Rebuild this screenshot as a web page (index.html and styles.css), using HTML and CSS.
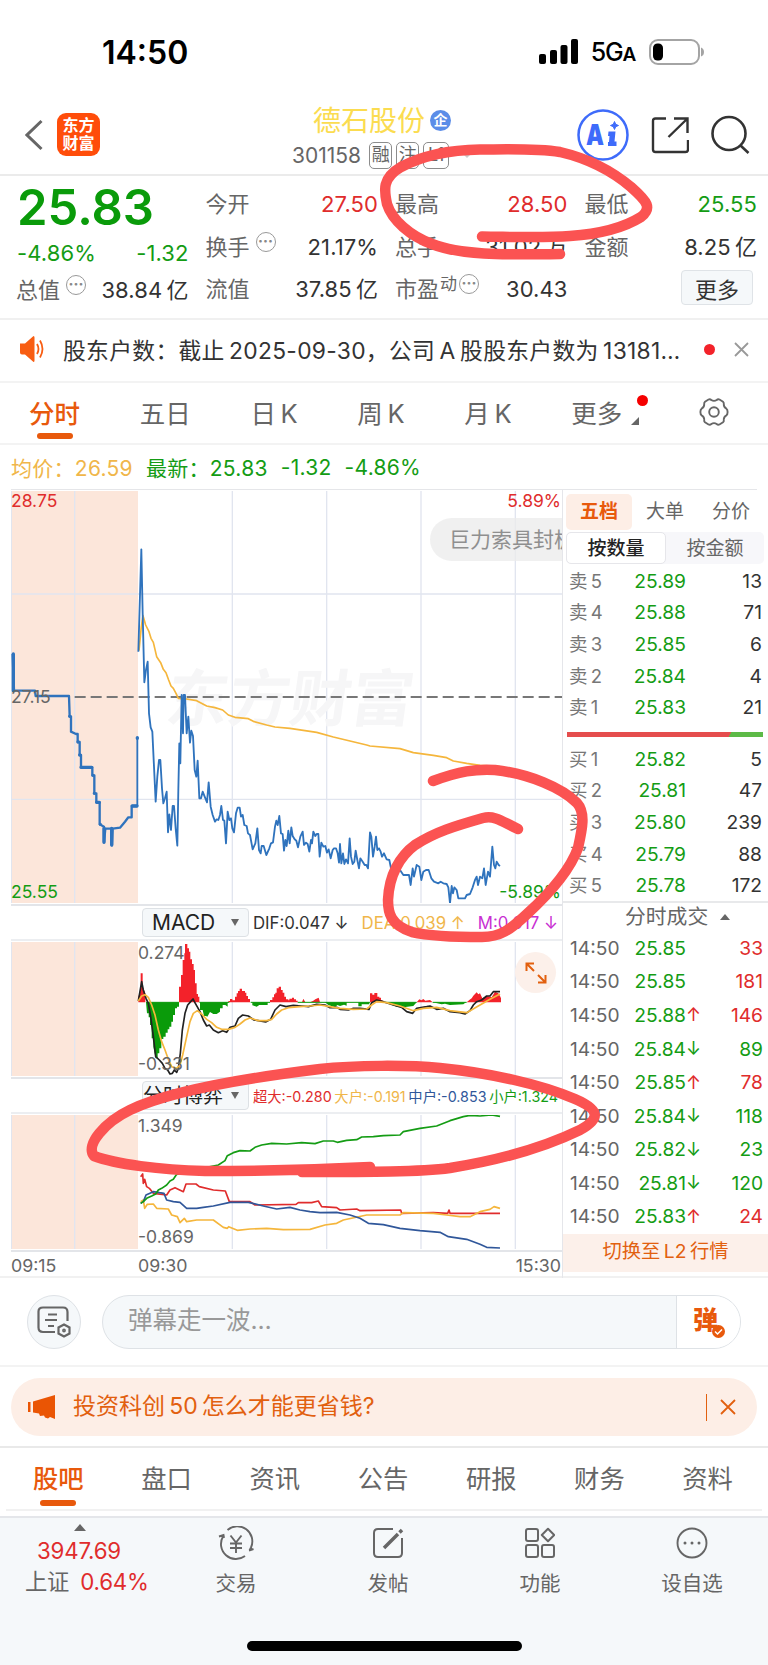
FILE: index.html
```html
<!DOCTYPE html>
<html lang="zh-CN">
<head>
    <meta charset="UTF-8">
    <title>德石股份 301158</title>
    <link rel="stylesheet" href="styles.css">
</head>
<body>

<div class="phone">
    <div class="status">
        <span class="clock">14:50</span>
        <div class="status-right">
            <svg width="40" height="26" viewBox="0 0 40 26">
                <rect x="0" y="15" width="7" height="10" rx="2"/>
                <rect x="11" y="11" width="7" height="14" rx="2"/>
                <rect x="21.500" y="6" width="7" height="19" rx="2"/>
                <rect x="32" y="0" width="7" height="25" rx="2"/>
            </svg>
            <span class="net">5G<small>A</small></span>
            <svg width="56" height="26" viewBox="0 0 56 26">
                <rect x="1" y="1" width="49" height="24" rx="8" fill="none" stroke="#a4a4a4" stroke-width="2"/>
                <rect x="4" y="4.500" width="10" height="17" rx="4.500"/>
                <path d="M52 8.500q3 1 3 4.500t-3 4.500z" fill="#a4a4a4"/>
            </svg>
        </div>
    </div>

    <header class="header">
        <div class="header-side">
            <svg class="back" width="20" height="32" viewBox="0 0 20 32" fill="none" stroke="#666" stroke-width="3"><path d="M16.500 2 2 16l14.500 14"/></svg>
            <div class="logo">东方<br>财富</div>
        </div>
        <div class="stock">
            <div class="stock-name">德石股份<span class="badge">企</span></div>
            <div class="stock-code">301158 <i>融</i><i>注</i><i>L1</i><b class="caret"></b></div>
        </div>
        <div class="header-side tools">
            <svg width="52" height="52" viewBox="0 0 52 52">
                <circle cx="26" cy="26" r="24.500" fill="none" stroke="#3e6bfa" stroke-width="2.500"/>
                <text class="ai" x="9" y="36" textLength="18" lengthAdjust="spacingAndGlyphs">A</text>
                <path d="M31.500 22.500h7l-1 10h2v4.500h-8.500v-4h1l.5-6h-1.500z" fill="#3e6bfa"/>
                <path d="M37.500 12.500l1.200 2.800 2.800 1.200-2.800 1.200-1.200 2.800-1.200-2.800-2.800-1.200 2.800-1.200z" fill="#3e6bfa" stroke="#3e6bfa"/>
            </svg>
            <svg width="38" height="38" viewBox="0 0 38 38" fill="none" stroke="#333" stroke-width="2.400">
                <path d="M15 2.500H4.500Q2 2.500 2 5V33.500q0 2.500 2.500 2.500h30q2.500 0 2.500-2.500V24M23 2.500h13.500V17M36.500 2.500 17.500 21"/>
            </svg>
            <svg width="40" height="40" viewBox="0 0 40 40" fill="none" stroke="#333" stroke-width="2.600">
                <circle cx="18" cy="18.500" r="16.500"/><path d="M29 30l8.500 8"/>
            </svg>
        </div>
    </header>

    <section class="quote">
        <div class="quote-col first">
            <strong>25.83</strong>
            <div class="green"><span>-4.86%</span><span>-1.32</span></div>
            <div><label>总值<sup class="dots">···</sup></label><span>38.84&#8201;亿</span></div>
        </div>
        <div class="quote-col">
            <div><label>今开</label><span class="red">27.50</span></div>
            <div><label>换手<sup class="dots">···</sup></label><span>21.17%</span></div>
            <div><label>流值</label><span>37.85&#8201;亿</span></div>
        </div>
        <div class="quote-col">
            <div><label>最高</label><span class="red">28.50</span></div>
            <div><label>总手</label><span>31.02&#8201;万</span></div>
            <div><label>市盈<sup class="dong">动</sup><sup class="dots">···</sup></label><span>30.43</span></div>
        </div>
        <div class="quote-col">
            <div><label>最低</label><span class="green">25.55</span></div>
            <div><label>金额</label><span>8.25&#8201;亿</span></div>
            <div><label></label><button class="more">更多</button></div>
        </div>
    </section>

    <section class="notice">
        <svg width="24" height="26" viewBox="0 0 24 26">
            <path d="M0 7.500h5L13.500 0q1 0 1 1.500v23q0 1.500-1 1.500L5 18.500H2q-2 0-2-2z" fill="#f85d12"/>
            <path d="M17 8q3 5 0 10M20 4.500q5 8.500 0 17" fill="none" stroke="#f85d12" stroke-width="1.800"/>
        </svg>
        <p>股东户数：截止&#8201;2025-09-30，公司&#8201;A&#8201;股股东户数为&#8201;13181…</p>
        <b class="dot"></b>
        <svg width="15" height="15" viewBox="0 0 15 15" stroke="#999" stroke-width="1.800"><path d="M1 1l13 13M14 1 1 14"/></svg>
    </section>

    <nav class="periods">
        <a class="on">分时</a>
        <a>五日</a>
        <a>日&#8201;K</a>
        <a>周&#8201;K</a>
        <a>月&#8201;K</a>
        <a class="with-dot">更多<svg width="8" height="8"><path d="M8 0v8H0z" fill="#666"/></svg></a>
        <svg class="gear" width="30" height="30" viewBox="0 0 30 30" fill="none" stroke="#666" stroke-width="1.900">
            <path d="M9.500 2.500q1.500-.8 2.800.5 2.700 1.800 5.400 0 1.300-1.300 2.800-.5l3.500 2.200q1 .8.800 2.400-.2 3.200 2.600 4.600 1.200.8 1.200 3.300t-1.200 3.300q-2.800 1.400-2.600 4.600.2 1.600-.8 2.400l-3.500 2.200q-1.500.8-2.800-.5-2.700-1.800-5.400 0-1.300 1.300-2.800.5L6 25.300q-1-.8-.8-2.400.2-3.200-2.600-4.600-1.200-.8-1.200-3.300t1.200-3.300Q5.400 10.300 5.200 7.100 5 5.500 6 4.700z"/>
            <circle cx="15" cy="15" r="4.800"/>
        </svg>
    </nav>

    <div class="legend">
        <span class="gold">均价：26.59</span><span>最新：25.83</span><span>-1.32</span><span>-4.86%</span>
    </div>

    <main class="trade">
        <div class="charts">
            <!-- intraday price -->
            <div class="chart">
                <svg class="plot" viewBox="33 33 1653 1236" preserveAspectRatio="none">
                    <rect x="33" y="33" width="381" height="1236" fill="#fce6da"/>
                    <path class="grid" d="M34 33v1236M224 33v1236M697 33v1236M980 33v1236M1263 33v1236M1546 33v1236M33 342h1653M33 958h1653"/>
                    <text class="watermark" transform="translate(492 722) skewX(-8)">东方财富</text>
                    <path d="M224 651h1462" stroke="#777" stroke-width="6" stroke-dasharray="33 15"/>
                    <polyline class="avg" points="417,512 424,440 429,407 437,435 447,455 453,475 460,487 470,530 482,548 490,568 498,578 506,600 513,618 520,625 528,640 535,655 560,657 590,662 620,678 645,683 668,690 685,705 705,712 745,716 760,724 800,735 825,741 870,745 950,757 1000,771 1050,783 1100,795 1110,798 1200,806 1240,818 1300,826 1340,833 1360,843 1400,850 1440,856 1500,860"/>
                    <polyline class="pre" points="38,522 42,632 105,632 107,648 207,648 209,709 213,709 213,755 228,762 233,762 233,786 239,786 239,825 243,825 243,862 277,862 277,886 283,886 283,940 289,940 289,967 299,967 299,1033 312,1040 312,1087 316,1046 334,1046 336,1096 338,1046 360,1043 375,1025 385,1012 395,1012 395,978 412,978"/>
                    <path class="pre-dot" d="M40 522v110M312 1045v42M335 1045v50M209 709v0M234 786v0M239 825v0M243 862h32M279 886v0M283 940v0M290 967h8M301 1033v0M397 978h14M412 773v2"/>
                    <path class="price" d="M412 978V773"/>
                    <polyline class="price" points="415,515 424,208 428,400 433,607 438,570 443,545 447,700 452,742 457,755 462,860 467,965 472,890 477,840 481,840 486,925 490,970 495,955 500,935 504,1057 508,1003 513,1050 518,978 522,978 527,1045 532,1097 535,930 538,790 541,850 545,645 549,760 551,645 555,645 560,760 565,710 570,788 574,752 579,768 584,870 589,890 593,842 598,955 603,955 608,935 614,950 621,967 626,907 632,980 638,1005 645,1025 650,1018 655,1020 660,1005 664,978 669,1020 673,1022 678,1090 683,995 688,1020 693,1015 697,1045 702,1057 708,1000 713,983 719,983 723,1010 728,1005 733,1035 740,1038 744,1060 750,1065 758,1108 766,1090 772,1045 777,1110 782,1120 785,1098 791,1098 799,1125 808,1105 813,1090 819,1087 825,1040 829,1022 833,1035 838,1008 843,1060 848,1062 852,1112 856,1080 860,1098 865,1052 869,1090 874,1042 878,1068 884,1078 889,1082 894,1102 901,1070 908,1055 912,1095 918,1088 923,1092 928,1115 933,1080 936,1090 940,1055 946,1068 950,1062 955,1062 959,1130 964,1088 970,1100 976,1098 981,1118 986,1108 992,1135 998,1110 1002,1105 1008,1105 1013,1120 1017,1148 1020,1092 1024,1150 1029,1120 1033,1152 1038,1138 1044,1150 1049,1075 1053,1130 1058,1152 1063,1145 1067,1112 1072,1140 1077,1165 1081,1135 1088,1145 1094,1155 1099,1155 1104,1165 1110,1057 1114,1070 1119,1130 1124,1100 1128,1070 1132,1110 1137,1105 1142,1115 1146,1130 1152,1120 1160,1138 1168,1140 1173,1165 1180,1170 1190,1175 1200,1170 1210,1185 1227,1185 1232,1215 1238,1165 1242,1190 1250,1155 1258,1160 1264,1200 1270,1175 1278,1170 1286,1170 1294,1195 1302,1205 1315,1210 1322,1205 1330,1210 1340,1212 1345,1222 1350,1270 1355,1218 1359,1240 1363,1222 1370,1230 1375,1255 1395,1255 1400,1245 1410,1242 1418,1222 1425,1200 1430,1190 1434,1215 1440,1190 1447,1195 1452,1165 1457,1215 1464,1175 1470,1190 1477,1100 1482,1155 1486,1165 1490,1145 1496,1155 1500,1158"/>
                </svg>
                <span class="tag tl red">28.75</span>
                <span class="tag ml">27.15</span>
                <span class="tag bl green">25.55</span>
                <span class="tag tr red">5.89%</span>
                <span class="tag br green">-5.89%</span>
                <div class="bullet">巨力索具封板</div>
            </div>

            <div class="indicator">
                <div class="select">MACD<i></i></div>
                <p class="macd-values"><span>DIF:0.047 ↓</span><span class="gold">DEA:0.039 ↑</span><span class="purple">M:0.017 ↓</span></p>
            </div>
            <div class="chart small">
                <svg class="plot" viewBox="33 156 1653 402" preserveAspectRatio="none">
                    <rect x="33" y="156" width="381" height="402" fill="#fce6da"/>
                    <path class="grid" d="M34 156v402M224 156v402M697 156v402M980 156v402M1263 156v402M1546 156v402"/>
                    <path fill="#f3222a" d="M415 337V320L422 300V250H428V290L436 310V337ZM537 337V290H543V255H548V210H553V190H555V162H562V175H567V185H571V208H576V222H581V240H585V280H590V312H594V320H598V337ZM685 337V333H690V327H697V331H705V320H710V310H714V303H719V296H726V303H735V308H739V318H744V327H750V337ZM810 337V330H817V322H822V313H826V308H830V295H836V290H843V300H848V308H853V320H858V328H865V331H868V326H876V323H882V328H888V332H893V337ZM906 337 910 326 916 337ZM930 337 940 332 946 328 956 323 960 337ZM1110 337V310H1117V314H1123V309H1132V320H1138V323H1143V330H1147V337ZM1250 337 1258 328 1264 331 1270 327 1276 332 1290 330 1298 337ZM1400 337 1408 330 1415 325 1420 317 1430 307 1435 313 1440 310 1447 325 1460 318 1475 322 1485 305 1495 310 1500 318 1503 325V337Z"/>
                    <path fill="#0a9b0a" d="M438 337 441 370H446V382H450V405H455V445H460V470L467 505H473V490H478V475H484V447H490V440H497V428H503V418H508V410H514V395H519V375H525V355H531V350H537V337ZM600 337V360H608L612 378H618L622 380 630 366 640 372 650 372 660 365V355H668V345H676L683 350V337ZM757 337V346L770 350 778 345H803V337ZM975 337 985 345 1005 352 1012 345 1020 348 1032 344 1040 347V337ZM1075 337V349H1085V343H1108V337ZM1155 337 1170 343 1190 350 1210 352 1240 348 1250 337ZM1298 337 1325 343 1335 341 1350 345 1390 343 1398 337Z"/>
                    <path d="M438 337h99M598 337h90M752 337h58M893 337h217M1146 337h104M1298 337h102" stroke="#0a9b0a" stroke-width="3"/>
                    <polyline class="line" stroke="#222" points="415,333 425,275 430,300 438,325 445,340 452,380 460,440 467,500 478,510 487,520 495,535 503,540 510,552 517,550 523,540 530,547 535,535 541,490 547,420 555,370 563,345 572,335 579,327 586,340 600,365 610,390 620,408 628,405 640,420 655,428 668,422 680,427 690,412 705,408 715,385 728,375 745,378 762,390 775,392 797,396 812,388 825,360 840,345 858,350 880,346 905,348 925,350 950,343 975,345 990,353 1010,352 1020,358 1045,360 1060,355 1080,355 1107,358 1115,338 1130,330 1150,335 1180,345 1205,352 1220,365 1238,370 1250,355 1280,350 1290,348 1310,358 1330,355 1350,365 1380,368 1395,372 1410,362 1420,345 1430,335 1445,330 1460,318 1470,318 1480,305 1500,305"/>
                    <polyline class="line" stroke="#f5b63c" points="415,333 425,318 435,314 445,322 455,345 465,375 475,420 485,455 495,480 505,508 515,530 530,535 540,525 548,495 560,440 570,395 580,370 592,362 605,372 620,388 635,398 650,412 665,418 685,418 705,412 720,402 735,390 750,384 775,392 800,392 815,388 830,372 845,360 865,353 900,350 930,348 960,345 990,350 1020,355 1060,358 1100,357 1115,345 1130,335 1160,338 1200,348 1240,362 1270,355 1310,352 1350,362 1400,368 1440,345 1470,328 1500,312"/>
                </svg>
                <span class="tag tm">0.274</span>
                <span class="tag bm">-0.331</span>
                <div class="expand">
                    <svg width="22" height="22" viewBox="0 0 22 22" fill="none" stroke="#e2600f" stroke-width="2"><path d="M1.500 9V1.500H9M1.500 1.500 9 9M20.500 13v7.500H13M20.500 20.500 13 13"/></svg>
                </div>
            </div>

            <div class="indicator">
                <div class="select game">分时博弈<i></i></div>
                <p class="game-values"><span class="red">超大:-0.280</span><span class="gold">大户:-0.191</span><span class="blue">中户:-0.853</span><span class="green">小户:1.324</span></p>
            </div>
            <div class="chart small">
                <svg class="plot" viewBox="33 675 1653 402" preserveAspectRatio="none">
                    <rect x="33" y="675" width="381" height="402" fill="#fce6da"/>
                    <path class="grid" d="M34 675v402M224 675v402M697 675v402M980 675v402M1263 675v402M1546 675v402"/>
                    <polyline class="line" stroke="#e02c2c" points="422,860 428,852 430,880 434,868 440,890 448,895 460,910 500,915 510,900 525,893 550,905 558,882 588,882 598,890 640,900 676,903 688,935 750,935 765,945 888,943 895,938 935,938 955,933 965,950 1010,953 1020,960 1070,957 1080,962 1202,960 1205,970 1300,968 1343,970 1347,960 1350,970 1500,970"/>
                    <polyline class="line" stroke="#f5b63c" points="422,935 430,930 434,955 442,943 460,942 470,955 505,957 515,975 532,980 540,998 553,985 560,995 590,990 640,990 670,1012 682,1015 686,1010 712,1021 750,1017 800,1015 850,1019 930,1018 975,1005 1010,1000 1030,990 1100,975 1200,975 1210,968 1300,970 1340,975 1380,980 1410,980 1440,965 1470,958 1482,950 1500,955"/>
                    <polyline class="line" stroke="#30579a" points="422,940 430,935 438,915 460,905 478,908 492,910 500,930 520,935 540,937 560,955 590,955 610,952 640,948 690,937 745,937 790,948 830,957 870,952 900,960 930,965 960,968 1010,967 1050,975 1080,985 1105,1000 1150,1004 1200,1015 1260,1022 1320,1027 1345,1040 1400,1048 1440,1063 1460,1072 1500,1074"/>
                    <polyline class="line" stroke="#149c14" points="422,940 430,935 440,925 455,918 467,912 475,900 485,895 500,885 510,873 520,868 530,853 590,838 655,825 675,812 682,797 700,788 720,782 750,783 765,772 785,765 815,760 860,762 905,758 945,761 970,753 1000,753 1012,757 1040,751 1070,749 1085,741 1120,740 1150,737 1200,735 1210,725 1260,715 1310,708 1350,692 1390,680 1410,676 1440,678 1475,675 1500,679"/>
                </svg>
                <span class="tag tm">1.349</span>
                <span class="tag bm">-0.869</span>
            </div>
            <div class="times"><span>09:15</span><span>09:30</span><span>15:30</span></div>
        </div>

        <aside class="book">
            <div class="book-tabs"><a class="on">五档</a><a>大单</a><a>分价</a></div>
            <div class="switch"><a class="on">按数量</a><a>按金额</a></div>
            <div class="levels">
                <div><label>卖&#8201;5</label><span>25.89</span><b>13</b></div>
                <div><label>卖&#8201;4</label><span>25.88</span><b>71</b></div>
                <div><label>卖&#8201;3</label><span>25.85</span><b>6</b></div>
                <div><label>卖&#8201;2</label><span>25.84</span><b>4</b></div>
                <div><label>卖&#8201;1</label><span>25.83</span><b>21</b></div>
            </div>
            <div class="ratio"></div>
            <div class="levels">
                <div><label>买&#8201;1</label><span>25.82</span><b>5</b></div>
                <div><label>买&#8201;2</label><span>25.81</span><b>47</b></div>
                <div><label>买&#8201;3</label><span>25.80</span><b>239</b></div>
                <div><label>买&#8201;4</label><span>25.79</span><b>88</b></div>
                <div><label>买&#8201;5</label><span>25.78</span><b>172</b></div>
            </div>
            <div class="ticks-title">分时成交<svg width="10" height="6"><path d="M5 0l5 6H0z" fill="#666"/></svg></div>
            <div class="ticks">
                <div><label>14:50</label><span>25.85</span><i></i><b class="red">33</b></div>
                <div><label>14:50</label><span>25.85</span><i></i><b class="red">181</b></div>
                <div><label>14:50</label><span>25.88</span><i class="red">↑</i><b class="red">146</b></div>
                <div><label>14:50</label><span>25.84</span><i>↓</i><b>89</b></div>
                <div><label>14:50</label><span>25.85</span><i class="red">↑</i><b class="red">78</b></div>
                <div><label>14:50</label><span>25.84</span><i>↓</i><b>118</b></div>
                <div><label>14:50</label><span>25.82</span><i>↓</i><b>23</b></div>
                <div><label>14:50</label><span>25.81</span><i>↓</i><b>120</b></div>
                <div><label>14:50</label><span>25.83</span><i class="red">↑</i><b class="red">24</b></div>
            </div>
            <div class="level2">切换至&#8201;L2&#8201;行情</div>
        </aside>
    </main>

    <section class="danmaku">
        <div class="round">
            <svg width="34" height="32" viewBox="0 0 34 32" fill="none" stroke="#666" stroke-width="2.200">
                <path d="M18 26H6q-4.500 0-4.500-4.500v-16Q1.500 1.500 6 1.500h20q4.500 0 4.500 4.500v9M11 8.500h9M8 14h12M11 20h6"/>
                <path d="M27 18.500l5.500 3v6l-5.500 3-5.500-3v-6z"/><circle cx="27" cy="24.500" r=".8"/>
            </svg>
        </div>
        <div class="input">
            <span>弹幕走一波…</span>
            <div class="send">弹
                <svg width="13" height="13" viewBox="0 0 13 13"><circle cx="6.500" cy="6.500" r="6.500" fill="#e8590c"/><path d="M3 6.500l2.500 2.500 4.500-4.500" fill="none" stroke="#fff" stroke-width="1.500"/></svg>
            </div>
        </div>
    </section>

    <section class="promo">
        <div class="promo-bar">
            <svg width="28" height="24" viewBox="0 0 28 24" fill="#ea5504"><path d="M0 7h2.500v10H0zM5 6.500 27 0v24l-5-2-2 1.500-3-1-1-2-4 .5-1-2.500-6-1z"/></svg>
            <p>投资科创&#8201;50&#8201;怎么才能更省钱?</p>
            <i></i>
            <svg width="16" height="16" viewBox="0 0 16 16" stroke="#e2600f" stroke-width="1.800"><path d="M1 1l14 14M15 1 1 15"/></svg>
        </div>
    </section>

    <nav class="sections">
        <a class="on">股吧</a><a>盘口</a><a>资讯</a><a>公告</a><a>研报</a><a>财务</a><a>资料</a>
    </nav>

    <footer class="bottom">
        <div class="index">
            <svg width="12" height="7"><path d="M6 0l6 7H0z" fill="#666"/></svg>
            <span class="red">3947.69</span>
            <span>上证 <b class="red">0.64%</b></span>
        </div>
        <div class="item">
            <svg width="36" height="34" viewBox="0 0 36 34" fill="none" stroke="#666" stroke-width="1.900">
                <path d="M9.500 4A15 15 0 0 1 33 21.500L31.500 24.500M35.500 23l-4.500 1.500M27 30A15 15 0 0 1 5 10.500L5.500 9.500M1 10.500l4.500-1.500.5 3M12.500 9.500l5.500 7 5.500-7M12 17.500h12M12 22h12M18 16.500V27"/>
            </svg>
            <span>交易</span>
        </div>
        <div class="item">
            <svg width="32" height="32" viewBox="0 0 32 32" fill="none" stroke="#666" stroke-width="2">
                <path d="M21 2H6Q2 2 2 6v20q0 4 4 4h20q4 0 4-4V11"/><path d="M12 21 26 7M27.500 5.500l2.500-2.500" stroke-width="3.500"/>
            </svg>
            <span>发帖</span>
        </div>
        <div class="item">
            <svg width="30" height="30" viewBox="0 0 30 30" fill="none" stroke="#666" stroke-width="2">
                <rect x="1" y="1" width="12" height="12" rx="2"/><rect x="1" y="17" width="12" height="12" rx="2"/><rect x="17" y="17" width="12" height="12" rx="2"/><path d="M23 .800 29.200 7 23 13.200 16.800 7z" stroke-linejoin="round"/>
            </svg>
            <span>功能</span>
        </div>
        <div class="item">
            <svg width="32" height="32" viewBox="0 0 32 32" fill="none" stroke="#666" stroke-width="1.900">
                <circle cx="16" cy="16" r="14.500"/><path d="M9 16h0M16 16h0M23 16h0" stroke-width="3" stroke-linecap="round"/>
            </svg>
            <span>设自选</span>
        </div>
    </footer>
    <div class="home"></div>

    <!-- marker strokes drawn over the page -->
    <svg class="marker" width="768" height="1665" viewBox="0 0 768 1665">
        <path d="M482 236.500C520 237 545 238 570 236C600 234 625 227 641 217C652 208 648 202 631 187C612 171 590 159 560 152C535 148 500 149.500 480 149.500C445 150 420 157 401 167C382 178 384 190 387 204C392 220 410 236 432 244C460 255 500 255 560 254"/>
        <path d="M433 781C460 771 475 769 495 770C530 774 562 788 577 803C586 813 582 830 578 848C570 870 550 893 527 914C510 930 500 937 482 937C460 937 430 936 412 932C390 925 388 912 388 900C389 875 400 856 415 845C435 832 455 826 483 818C495 815 503 822 518 829"/>
        <path d="M370 1167C310 1170 250 1171 205 1171C160 1170 115 1164 94 1156C85 1145 105 1122 130 1110C165 1093 230 1080 320 1069C355 1065 410 1065 440 1068C490 1073 540 1084 575 1099C603 1111 598 1120 580 1130C545 1147 500 1160 450 1168C420 1172 370 1172 302 1172"/>
    </svg>
</div>

</body>
</html>
```
FILE: styles.css
```css
* { box-sizing: border-box; }
body {
    margin: 0;
    background: #fff;
    color: #333;
    font-family: Inter, "Noto Sans CJK SC", sans-serif;
    font-size: 21px;
}
p { margin: 0; }
i { font-style: normal; }
svg { display: block; flex-shrink: 0; }
.phone { position: relative; width: 768px; height: 1665px; overflow: hidden; }
.red { color: #e02c2c !important; }
.green { color: #149c14 !important; }
.gold { color: #f0b64a !important; }
.blue { color: #30579a; }
.purple { color: #c82ed2; }

/* status bar */
.status {
    height: 90px;
    padding: 14px 63px 0 102px;
    display: flex;
    justify-content: space-between;
    align-items: center;
    color: #000;
}
.clock { font-size: 32px; font-weight: 600; }
.status-right { display: flex; align-items: center; gap: 12px; }
.net { margin-right: 2px; font-size: 25px; font-weight: 500; letter-spacing: -1.2px; }
.net small { font-size: 19px; font-weight: 600; }

/* header */
.header {
    height: 86px;
    padding: 0 17px 0 25px;
    display: grid;
    grid-template-columns: 230px 1fr 230px;
    align-items: center;
    border-bottom: 2px solid #ebebeb;
}
.header-side { display: flex; align-items: center; gap: 12px; padding-top: 5px; }
.tools { justify-content: flex-end; gap: 22px; }
.logo {
    width: 43px;
    height: 43px;
    border-radius: 9px;
    background: #ff4d0a;
    color: #fff;
    font-size: 16px;
    line-height: 18px;
    font-weight: 700;
    text-align: center;
    padding-top: 3px;
}
.ai { font-size: 29px; font-weight: 900; fill: #3e6bfa; }
.stock { white-space: nowrap; padding: 9px 0 0 30px; }
.stock-name { display: flex; align-items: center; height: 37px; padding-left: 28px; font-size: 28px; line-height: 30px; color: #fbdc50; }
.badge {
    width: 21px;
    height: 21px;
    margin-left: 5px;
    border-radius: 50%;
    background: #5b8de8;
    color: #fff;
    font-size: 14px;
    line-height: 20px;
    text-align: center;
    font-weight: 700;
}
.stock-code { display: flex; align-items: center; height: 32px; padding-left: 7px; font-size: 21px; color: #666; }
.stock-code i { width: 23px; height: 27px; margin-left: 4px; border: 1.5px solid #8c8c8c; border-radius: 5px; font-size: 18px; line-height: 23px; text-align: center; letter-spacing: -0.3px; }
.stock-code i:first-of-type { margin-left: 8px; }
.stock-code i:last-of-type { width: 26px; }
.caret { margin-left: 12px; border: 6px solid transparent; border-top-color: #ccc; border-bottom: 0; }

/* quote */
.quote {
    height: 144px;
    padding: 7px 11px 0 17px;
    display: grid;
    grid-template-columns: repeat(4, 171.5px);
    column-gap: 18px;
    border-bottom: 2px solid #f0f0f0;
}
.quote-col > div { height: 42.5px; display: flex; justify-content: space-between; align-items: center; white-space: nowrap; }
.quote-col label { display: flex; margin-left: -1px; color: #666; font-size: 22px; line-height: 30px; }
.quote-col span { font-size: 22px; line-height: 30px; letter-spacing: 0.1px; }
.quote-col strong { display: block; height: 48px; color: #0a9b0a; font-size: 49px; line-height: 49px; font-weight: 600; }
.first > div { height: 39px; }
.first > .green { padding-top: 5px; }
.dots {
    width: 20px;
    height: 20px;
    margin: 0 0 0 6px;
    border: 1.6px solid #999;
    border-radius: 50%;
    color: #888;
    font-size: 14px;
    line-height: 16px;
    font-weight: 800;
    text-align: center;
}
.dong { margin-left: 1px; font-size: 17px; line-height: 20px; }
.dong + .dots { margin-left: 2px; }
.more {
    width: 72px;
    height: 35px;
    margin: -3px 4px 0 0;
    padding: 0;
    border: 1.5px solid #dfe3e7;
    border-radius: 4px;
    background: #f5f8fa;
    color: #333;
    font: 22px/30px "Noto Sans CJK SC", sans-serif;
}

/* notice */
.notice { height: 63px; padding: 0 19px 3px 20px; display: flex; align-items: center; border-bottom: 2px solid #f3f3f3; font-size: 22.8px; }
.notice p { flex: 1; padding-left: 19px; white-space: nowrap; letter-spacing: 0.3px; }
.dot { width: 11px; height: 11px; margin-right: 19px; border-radius: 50%; background: #f3222a; }

/* period tabs */
.periods { position: relative; height: 62px; padding: 0 39px 3px 29px; display: flex; justify-content: space-between; align-items: center; border-bottom: 2px solid #f3f3f3; color: #666; font-size: 25.5px; }
.periods a, .sections a { position: relative; white-space: nowrap; }
.periods .on, .sections .on { color: #e8590c; font-weight: 500; }
.periods .on::after, .sections .on::after {
    content: "";
    position: absolute;
    left: 50%;
    bottom: -9px;
    width: 36px;
    height: 6px;
    margin-left: -18px;
    border-radius: 3px;
    background: #e8590c;
}
.with-dot { display: flex; align-items: flex-end; gap: 9px; }
.with-dot svg { margin-bottom: 5px; }
.with-dot::after { content: ""; position: absolute; right: -9px; top: 2px; width: 11px; height: 11px; border-radius: 50%; background: #f50000; }

.legend { height: 45px; margin: 0 11px; display: flex; align-items: center; gap: 13px; border-bottom: 1px solid #e5e6e9; color: #149c14; letter-spacing: 0.28px; }

/* charts */
.trade { height: 788px; display: grid; grid-template-columns: 563px 205px; border-bottom: 2px solid #f1f1f1; }
.charts { padding-left: 11px; border-right: 1px solid #e5e6ea; }
.chart { position: relative; height: 416px; padding-top: 1px; border-bottom: 2px solid #e3e5e9; overflow: hidden; }
.chart.small { height: 138px; }
.plot { width: 551px; height: 412px; }
.small .plot { height: 134px; }
.plot polyline, .price, .avg { fill: none; stroke-linejoin: round; }
.grid { stroke: #e1e5ef; stroke-width: 4; }
.price { stroke: #2f73bd; stroke-width: 5.5; }
.avg { stroke: #f5b63c; stroke-width: 5; }
.pre { stroke: #2f73bd; stroke-width: 7; }
.pre-dot { stroke: #2f73bd; stroke-width: 10; stroke-linecap: round; }
.line { stroke-width: 5; }
.watermark { font: 700 185px "Noto Sans CJK SC", sans-serif; fill: #f6f6f7; }
.tag { position: absolute; font-size: 17.5px; line-height: 20px; color: #666; }
.tl { left: 0; top: 1px; }
.ml { left: 0; top: 197px; }
.bl { left: 0; bottom: 2px; }
.tr { right: 1px; top: 1px; }
.br { right: 1px; bottom: 2px; }
.tm { left: 127px; top: 2px; }
.bm { left: 127px; bottom: 3px; }
.bullet { position: absolute; left: 419px; top: 28px; width: 160px; height: 43px; padding-left: 19px; border-radius: 22px; background: rgba(235, 235, 235, 0.75); color: #8f8f8f; line-height: 43px; white-space: nowrap; }
.indicator { height: 35px; padding-left: 131px; display: flex; align-items: center; border-bottom: 2px solid #eceef1; white-space: nowrap; }
.select { width: 107px; height: 29px; padding: 0 9px; border: 1px solid #dde1e5; border-radius: 4px; background: #f5f8fa; display: flex; justify-content: space-between; align-items: center; line-height: 26px; color: #222; }
.select i { border: 4.5px solid transparent; border-top: 7px solid #666; border-bottom: 0; }
.game { padding-left: 0; font-size: 20px; }
.macd-values { flex: 1; display: flex; justify-content: space-between; padding: 0 4px; font-size: 16.8px; }
.game-values { flex: 1; display: flex; justify-content: space-between; padding: 0 4px; font-size: 14.3px; }
.expand { position: absolute; right: 6px; top: 11px; width: 41px; height: 41px; border-radius: 50%; background: #fcf0ea; display: flex; align-items: center; justify-content: center; }
.times { display: flex; height: 26px; align-items: center; font-size: 17.8px; color: #666; }
.times span:nth-child(1) { width: 127px; }
.times span:nth-child(3) { margin-left: auto; padding-right: 1px; }

/* order book */
.book { min-width: 0; }
.book-tabs { height: 42px; padding: 4px 4px 2px 3px; display: flex; font-size: 19px; color: #666; }
.book-tabs a { width: 66px; line-height: 35px; text-align: center; border-radius: 5px; }
.book-tabs .on { background: #fdeee6; color: #e8590c; font-weight: 700; }
.switch { height: 32px; margin: 0 4px 0 3px; display: flex; background: #f7f7fa; border-radius: 5px; font-size: 19px; line-height: 33px; text-align: center; color: #666; }
.switch a { flex: 1; }
.switch .on { background: #fff; border: 1px solid #e6e6ea; border-radius: 5px; color: #222; font-weight: 500; line-height: 32px; }
.levels { padding: 1px 6px 0 6px; font-size: 19.2px; }
.levels div { height: 31.6px; display: flex; align-items: center; }
.levels label { width: 42px; margin-top: -2px; font-size: 18.5px; color: #777; white-space: nowrap; }
.levels span { width: 75px; text-align: right; color: #149c14; }
.levels b { flex: 1; text-align: right; font-weight: 400; }
.ratio { height: 5px; margin: 9px 5px 5px 4px; background: linear-gradient(120deg, #e54d4d 82.5%, #5dba47 82.8%); }
.ticks-title { height: 30px; padding: 0 38px 0 62px; border-top: 2px solid #e8e9eb; display: flex; justify-content: space-between; align-items: center; color: #666; font-size: 20.8px; line-height: 27px; }
.ticks { padding: 0 5px 0 7px; font-size: 19.2px; }
.ticks div { height: 33.6px; display: flex; align-items: center; color: #149c14; }
.ticks label { width: 52px; color: #666; }
.ticks span { width: 64px; text-align: right; }
.ticks i { width: 15px; font-size: 18px; }
.ticks b { flex: 1; text-align: right; font-weight: 400; }
.level2 { height: 38px; margin-top: 1px; background: #fcf0ea; color: #e2600f; font-size: 19.3px; line-height: 34px; text-align: center; }

/* danmaku input */
.danmaku { height: 89px; padding: 0 27px; display: flex; align-items: center; gap: 22px; border-bottom: 2px solid #f3f3f3; }
.round { width: 54px; height: 54px; border: 1px solid #dee2e6; border-radius: 50%; background: #f5f8fa; display: flex; align-items: center; justify-content: center; }
.input { flex: 1; height: 54px; margin-left: -1px; padding-left: 25px; border: 1.5px solid #dee2e6; border-radius: 27px; background: #f5f8fa; display: flex; justify-content: space-between; overflow: hidden; font-size: 24.5px; line-height: 49px; color: #999; }
.send { position: relative; width: 64px; padding-left: 16px; border-left: 1px solid #dee2e6; background: #fff; color: #e8590c; font-size: 25px; line-height: 49px; font-weight: 900; }
.send svg { position: absolute; left: 35px; top: 29px; }

/* promo */
.promo { height: 81px; padding: 11px; border-bottom: 2px solid #e9e9e9; }
.promo-bar { height: 58px; padding: 0 21px 0 17px; border-radius: 29px; background: #fdeee6; display: flex; align-items: center; color: #e2600f; font-size: 23px; line-height: 32px; }
.promo-bar p { flex: 1; padding: 0 0 3px 17px; }
.promo-bar i { width: 1.5px; height: 27px; margin-right: 13px; background: #e2600f; }

/* section tabs */
.sections { height: 63px; margin: 0 6px; padding: 0 29px 4px 27px; display: flex; justify-content: space-between; align-items: center; border-bottom: 2px solid #f1f1f1; color: #666; font-size: 25.3px; }
.sections .on::after { bottom: -11px; }

/* bottom bar */
.bottom { height: 149px; margin-top: 5px; border-top: 2px solid #e4e6ea; background: #f5f8fa; display: grid; grid-template-columns: 160px repeat(4, 152px); color: #666; }
.index, .item { display: flex; flex-direction: column; align-items: center; }
.index { padding: 6px 0 0 16px; align-items: flex-start; font-size: 22.3px; line-height: 31px; white-space: nowrap; }
.index svg { margin: 0 0 4px 58px; }
.index span { margin-left: 9px; letter-spacing: -0.2px; }
.index .red { margin-left: 21px; }
.index b.red { font-weight: 400; margin-left: 5px; }
.item { padding-top: 8px; font-size: 20.5px; }
.item svg { height: 34px; }
.item span { margin-top: 9px; line-height: 30px; }
.home { position: absolute; left: 247px; bottom: 14px; width: 275px; height: 10px; border-radius: 5px; background: #000; }

.marker { position: absolute; left: 0; top: 0; fill: none; stroke: #fb5352; stroke-width: 10.5; stroke-linecap: round; stroke-linejoin: round; }
```
